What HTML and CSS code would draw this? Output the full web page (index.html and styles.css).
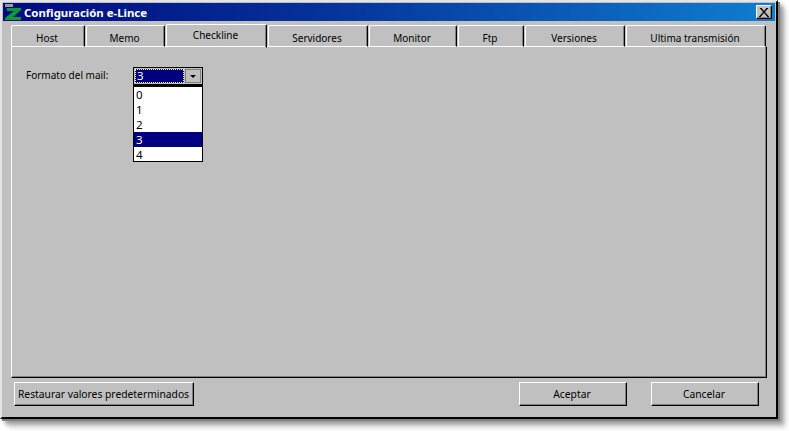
FILE: index.html
```html
<!DOCTYPE html>
<html lang="es">
<head>
<meta charset="utf-8">
<title>Configuración e-Lince</title>
<link rel="stylesheet" href="styles.css">
</head>
<body>
<div class="window">
  <div class="titlebar">
    <svg class="logo" width="17" height="17" viewBox="0 0 17 17"><rect x="0" y="1" width="8" height="3" fill="#9a9a9a"/><path d="M2 5H16V7L8 14H16V17H0V15L9 8H2Z" fill="#0d9a3c"/></svg>
    <span class="title">Configuración e-Lince</span>
    <button class="close"><svg width="10" height="9" viewBox="0 0 10 9"><path d="M1 0L9 9M2 0L10 9M9 0L1 9M8 0L0 9" stroke="#000" stroke-width="1" fill="none"/></svg></button>
  </div>
  <div class="tabs">
    <div class="tab w1">Host</div>
    <div class="tab w2">Memo</div>
    <div class="tab active w3">Checkline</div>
    <div class="tab w4">Servidores</div>
    <div class="tab w5">Monitor</div>
    <div class="tab w6">Ftp</div>
    <div class="tab w7">Versiones</div>
    <div class="tab w8">Ultima transmisión</div>
  </div>
  <div class="panel">
    <span class="label">Formato del mail:</span>
    <div class="combo-wrap">
      <div class="combo">
        <div class="value"><span>3</span></div>
        <div class="arrow"><i></i></div>
      </div>
      <ul class="list">
        <li>0</li>
        <li>1</li>
        <li>2</li>
        <li class="sel">3</li>
        <li>4</li>
      </ul>
    </div>
  </div>
  <div class="footer">
    <button class="btn wide">Restaurar valores predeterminados</button>
    <div class="right">
      <button class="btn">Aceptar</button>
      <button class="btn">Cancelar</button>
    </div>
  </div>
</div>
</body>
</html>
```
FILE: styles.css
```css
* { box-sizing: border-box; }
html, body { margin: 0; padding: 0; background: #fff; }
body { width: 789px; height: 431px; overflow: hidden; font-family: "Noto Sans", "Liberation Sans", sans-serif; font-size: 10px; color: #000; }
.window {
  width: 778px; height: 419px; background: #c0c0c0;
  border: 2px solid; border-color: #e4e4e4 #000 #000 #e4e4e4;
  padding: 1px 1px 0 1px;
  box-shadow: 2px 2px 0 #808080, 5px 5px 4px #989898, 8px 9px 5px #dcdcdc;
  display: flex; flex-direction: column;
}
.titlebar {
  height: 18px; flex: none; display: flex; align-items: center; padding: 0 3px 0 2px;
  background: linear-gradient(90deg, #000a80 0%, #05309a 40%, #0f7ed0 100%);
}
.logo { flex: none; margin-top: -1px; }
.title { color: #fff; font-weight: bold; font-size: 11.4px; margin-left: 2px; flex: 1; }
.close {
  width: 16px; height: 14px; padding: 0; background: #c0c0c0; display: flex; align-items: center; justify-content: center;
  border: 1px solid; border-color: #fff #000 #000 #fff; box-shadow: inset -1px -1px 0 #808080;
}
.tabs { display: flex; height: 26px; flex: none; margin: 0 0 0 8px; padding-top: 2px; align-items: flex-end; gap: 1px; position: relative; z-index: 1; }
.tab {
  height: 22px; display: flex; align-items: center; justify-content: center; padding: 3px 2px 0 0;
  border: 1px solid; border-color: #fff #000 #fff #fff; border-radius: 2px 2px 0 0;
  box-shadow: inset -1px 0 0 #808080;
}
.tab.active { height: 24px; padding: 0 2px 3px 0; margin-bottom: -1px; border-bottom-color: #c0c0c0; }
.w1 { width: 74px; }
.w2 { width: 79px; }
.w3 { width: 101px; }
.w4 { width: 100px; }
.w5 { width: 88px; }
.w6 { width: 66px; }
.w7 { width: 100px; }
.w8 { width: 140px; }
.panel {
  height: 332px; flex: none; margin: -1px 8px 0 8px; padding: 21px 14px;
  border: 1px solid; border-color: #fff #000 #000 #fff; box-shadow: inset -1px -1px 0 #808080;
  display: flex; align-items: flex-start;
}
.label { width: 107px; flex: none; }
.combo-wrap { width: 70px; flex: none; margin-top: -1px; position: relative; }
.combo { height: 18px; border: 1px solid #000; background: #c0c0c0; display: flex; padding: 1px; }
.value { flex: 1; background: #000080; color: #fff; border: 1px dotted #ffff80; padding-left: 1px; font-size: 11.5px; line-height: 12px; }
.arrow { width: 16px; margin-left: 1px; border: 1px solid #808080; display: flex; align-items: center; justify-content: center; }
.arrow i { width: 0; height: 0; border: 3px solid transparent; border-top-color: #000; border-bottom: 0; }
.list { list-style: none; margin: 0; padding: 0; height: 77px; background: #fff; border: 1px solid #000; border-top-width: 2px; font-size: 11.5px; }
.list li { height: 15px; line-height: 15px; padding-left: 2px; }
.list .sel { background: #000080; color: #fff; }
.footer { display: flex; justify-content: space-between; padding: 4px 16px 0 11px; }
.right { display: flex; gap: 24px; }
.btn {
  width: 108px; height: 24px; padding: 0 2px 0 0; background: #c0c0c0; font: inherit; font-size: 10.3px; color: #000;
  border: 1px solid; border-color: #fff #000 #000 #fff; box-shadow: inset -1px -1px 0 #808080;
}
.btn.wide { width: 180px; padding: 0 1px 0 0; }
```
